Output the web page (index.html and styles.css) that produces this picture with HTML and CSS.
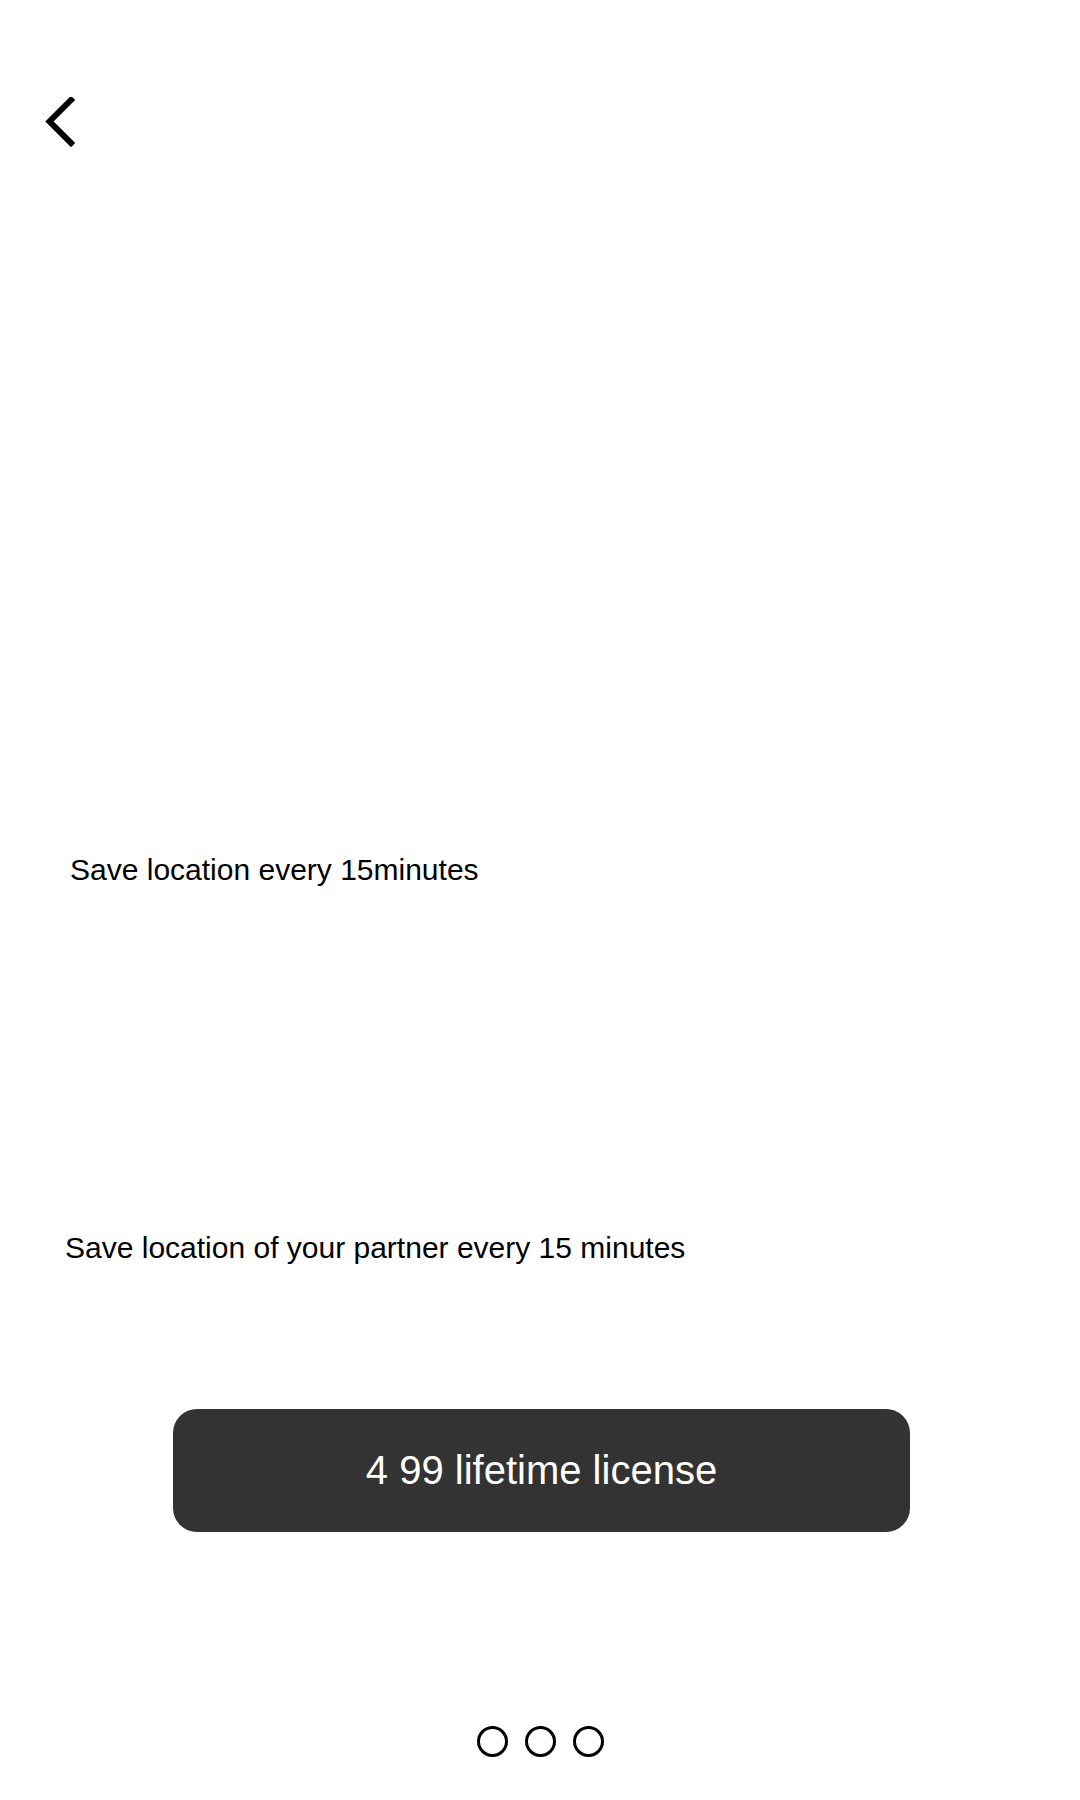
FILE: index.html
```html
<!DOCTYPE html>
<html lang="en">
<head>
<meta charset="utf-8">
<title>Upgrade</title>
<link rel="stylesheet" href="styles.css">
</head>
<body>
<div class="screen">
  <header class="topbar">
    <button class="back" aria-label="Back">
      <svg width="30" height="50" viewBox="0 0 30 50">
        <polyline points="26,3 4.5,24.5 26,46" fill="none" stroke="#000" stroke-width="6" stroke-linecap="square" stroke-linejoin="miter"/>
      </svg>
    </button>
  </header>
  <p class="feature feature-one">Save location every 15minutes</p>
  <p class="feature feature-two">Save location of your partner every 15 minutes</p>
  <div class="cta-row">
    <button class="cta">4 99 lifetime license</button>
  </div>
  <div class="dots">
    <span class="dot"></span>
    <span class="dot"></span>
    <span class="dot"></span>
  </div>
</div>
</body>
</html>
```

FILE: styles.css
```css
html, body {
  margin: 0;
  padding: 0;
  background: #ffffff;
}

body {
  font-family: "Liberation Sans", Arial, sans-serif;
  color: #000;
}

.screen {
  width: 1080px;
  height: 1800px;
  display: flex;
  flex-direction: column;
}

.topbar {
  height: 160px;
  padding: 97px 0 0 45px;
  box-sizing: border-box;
}

.back {
  border: 0;
  background: none;
  padding: 0;
  display: block;
}

.back svg {
  display: block;
}

.feature {
  margin: 0;
  font-size: 30px;
  line-height: 34px;
  color: #000;
}

.feature-one {
  margin-top: 693px;
  padding-left: 70px;
}

.feature-two {
  margin-top: 344px;
  padding-left: 65px;
}

.cta-row {
  margin-top: 144px;
  padding-left: 173px;
}

.cta {
  width: 737px;
  height: 123px;
  border: 0;
  border-radius: 24px;
  background: #333333;
  color: #ffffff;
  font-family: "Liberation Sans", Arial, sans-serif;
  font-size: 40px;
  padding: 0;
}

.dots {
  margin-top: 194px;
  display: flex;
  justify-content: center;
  gap: 17px;
  padding-left: 1px;
}

.dot {
  width: 31px;
  height: 31px;
  box-sizing: border-box;
  border: 3px solid #000;
  border-radius: 50%;
}
```
